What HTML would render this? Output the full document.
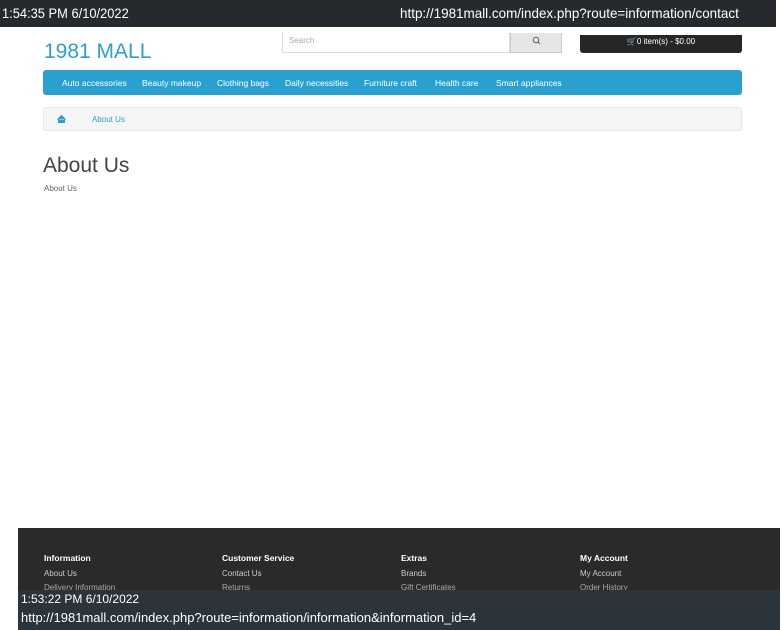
<!DOCTYPE html>
<html><head><meta charset="utf-8"><style>
*{margin:0;padding:0;box-sizing:border-box}
body{width:783px;height:630px;overflow:hidden;background:#fff;font-family:"Liberation Sans",sans-serif;position:relative;color:#444}
.abs{position:absolute}
</style></head><body>
<div class="abs" style="left:0;top:0;width:776px;height:27px;background:#262a2e"></div>
<div class="abs" style="left:2px;top:5px;color:#fff;font-size:14px;transform:scaleX(0.92);transform-origin:left;white-space:nowrap">1:54:35 PM 6/10/2022</div>
<div class="abs" style="left:400px;top:5px;color:#fff;font-size:14px;white-space:nowrap;transform:scaleX(0.96);transform-origin:left">http://1981mall.com/index.php?route=information/contact</div>

<div class="abs" style="left:44px;top:40px;color:#2f9fcf;font-size:21px">1981 MALL</div>
<div class="abs" style="left:282px;top:33px;width:228px;height:20px;border:1px solid #ddd;border-top:none;background:#fff;font-size:8px;color:#aaa;padding:3px 6px">Search</div>
<div class="abs" style="left:510px;top:33px;width:52px;height:20px;background:#e6e6e6;border:1px solid #ccc;border-top:none"><svg width="52" height="20"><circle cx="25" cy="7" r="2.8" fill="none" stroke="#666" stroke-width="1"/><line x1="27" y1="9" x2="29" y2="11" stroke="#666" stroke-width="1"/></svg></div>
<div class="abs" style="left:580px;top:35px;width:162px;height:18px;background:#262626;border-radius:0 0 3px 3px;color:#fff;font-size:8px;text-align:center;padding-top:2px">&#128722;0 item(s) - $0.00</div>

<div class="abs" style="left:43px;top:70px;width:699px;height:25px;background:#2aa0d0;border-radius:3px;color:#fff;font-size:8.5px;padding-top:8px;white-space:nowrap">
<span style="position:absolute;left:19px">Auto accessories</span>
<span style="position:absolute;left:99px">Beauty makeup</span>
<span style="position:absolute;left:174px">Clothing bags</span>
<span style="position:absolute;left:242px">Daily necessities</span>
<span style="position:absolute;left:321px">Furniture craft</span>
<span style="position:absolute;left:392px">Health care</span>
<span style="position:absolute;left:453px">Smart appliances</span>
</div>
<div class="abs" style="left:43px;top:107px;width:699px;height:24px;background:#f5f5f5;border:1px solid #e8e8e8;border-radius:3px;font-size:8px;color:#2f9fcf">
<svg style="position:absolute;left:13px;top:7px" width="9" height="8"><path d="M0.5 4.5 L4.5 0.5 L8.5 4.5 M1.5 4 V8 H7.5 V4" fill="#2f9fcf" stroke="#2f9fcf" stroke-width="1"/></svg>
<span style="position:absolute;left:48px;top:7px">About Us</span>
</div>
<div class="abs" style="left:43px;top:154px;font-size:21px;color:#444">About Us</div>
<div class="abs" style="left:44px;top:184px;font-size:8px;color:#666">About Us</div>

<div class="abs" style="left:18px;top:528px;width:762px;height:62px;background:#2a2a2a"></div>
<div class="abs" style="left:18px;top:590px;width:762px;height:40px;background:#2c343b"></div>
<div class="abs" style="top:553px;left:44px;color:#fff;font-size:8.5px;font-weight:bold">Information</div>
<div class="abs" style="top:553px;left:222px;color:#fff;font-size:8.5px;font-weight:bold">Customer Service</div>
<div class="abs" style="top:553px;left:401px;color:#fff;font-size:8.5px;font-weight:bold">Extras</div>
<div class="abs" style="top:553px;left:580px;color:#fff;font-size:8.5px;font-weight:bold">My Account</div>
<div class="abs" style="top:569px;left:44px;color:#ccc;font-size:8px">About Us</div>
<div class="abs" style="top:569px;left:222px;color:#ccc;font-size:8px">Contact Us</div>
<div class="abs" style="top:569px;left:401px;color:#ccc;font-size:8px">Brands</div>
<div class="abs" style="top:569px;left:580px;color:#ccc;font-size:8px">My Account</div>
<div class="abs" style="top:581px;left:0;width:783px;height:9px;overflow:hidden">
<div class="abs" style="top:2px;left:44px;color:#aaa;font-size:8px">Delivery Information</div>
<div class="abs" style="top:2px;left:222px;color:#aaa;font-size:8px">Returns</div>
<div class="abs" style="top:2px;left:401px;color:#aaa;font-size:8px">Gift Certificates</div>
<div class="abs" style="top:2px;left:580px;color:#aaa;font-size:8px">Order History</div>
</div>
<div class="abs" style="top:592px;left:21px;color:#fff;font-size:12px">1:53:22 PM 6/10/2022</div>
<div class="abs" style="top:610px;left:21px;color:#fff;font-size:13px;white-space:nowrap">http://1981mall.com/index.php?route=information/information&amp;information_id=4</div>
</body></html>
